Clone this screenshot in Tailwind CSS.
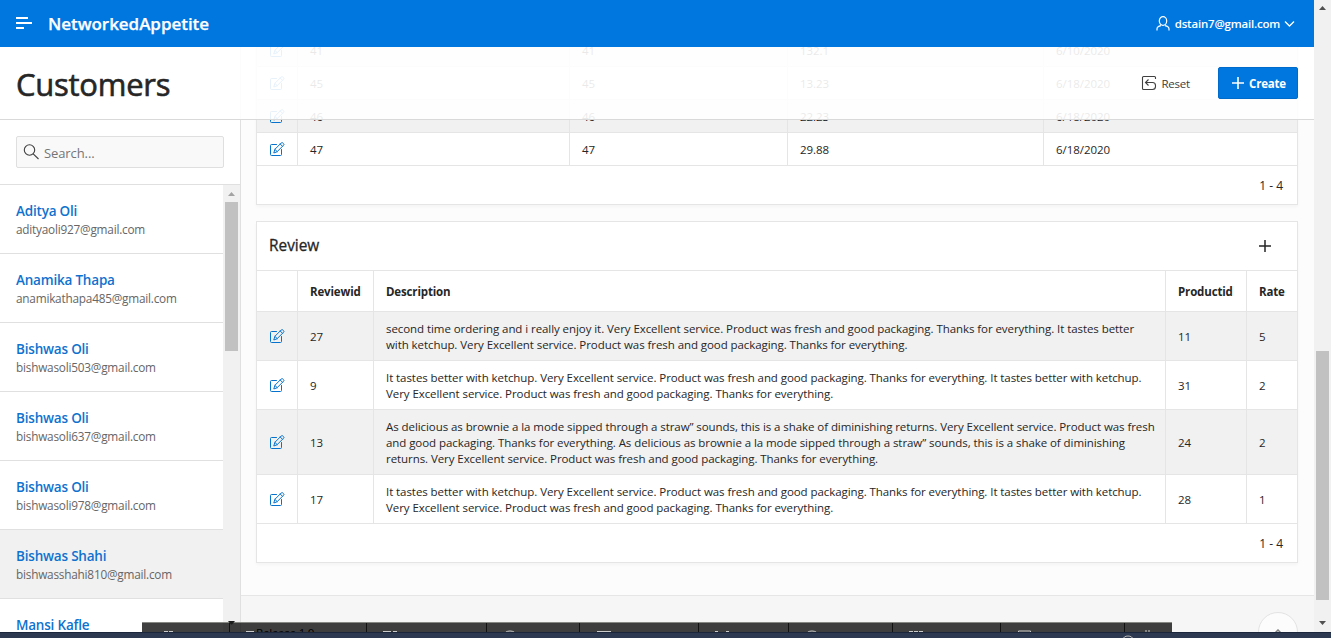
<!DOCTYPE html>
<html lang="en">
<head>
<meta charset="utf-8">
<title>Customers</title>
<script src="https://cdn.jsdelivr.net/npm/@tailwindcss/browser@4"></script>
</head>
<body class="font-['Open_Sans','Noto_Sans',sans-serif] text-[11.5px] text-[#262626] bg-[#fcfcfc]">
<svg class="hidden">
  <symbol id="edit" viewBox="0 0 16 16"><g fill="none" stroke="currentColor" stroke-width="1" stroke-linejoin="round" stroke-linecap="round"><path d="M7.500 2.500h-5a1 1 0 0 0-1 1v9a1 1 0 0 0 1 1h9a1 1 0 0 0 1-1V7.500"/><path d="M4.900 10.600l1-3.300 6.300-6.300a1.150 1.150 0 0 1 1.700 0l.6.600a1.150 1.150 0 0 1 0 1.700L8.200 9.600zM6 7.500l2.200 2.100M11.200 2l2.200 2.200"/></g></symbol>
</svg>
<div class="relative flex h-[638px] w-[1331px] overflow-hidden">
  <div class="flex w-[1314px] flex-col">
    <header class="z-20 flex h-[47px] shrink-0 items-center bg-[#0076df] pl-4 pr-[19px] text-white">
      <svg class="h-4 w-4" viewBox="0 0 16 16" fill="none" stroke="#fff" stroke-width="2"><path d="M0 2h12M0 7h16M0 12h8"/></svg>
      <h1 class="ml-4 whitespace-nowrap text-[17px] font-semibold tracking-[-0.04px] [-webkit-text-stroke:0.25px_white]">NetworkedAppetite</h1>
      <div class="ml-auto flex items-center">
        <svg class="mr-[4px] h-4 w-4" viewBox="0 0 16 16" fill="none" stroke="#fff" stroke-width="1.200"><ellipse cx="8" cy="5" rx="3.700" ry="4.300"/><path d="M2 14.500V13c0-1.700 1.500-2.800 4-3.300M14 14.500V13c0-1.700-1.500-2.800-4-3.300"/></svg>
        <span class="font-semibold tracking-[-0.2px]">dstain7@gmail.com</span>
        <svg class="ml-[4px] h-[10px] w-[11px]" viewBox="0 0 11 10" fill="none" stroke="#fff" stroke-width="1.300"><path d="M1 2.500l4.500 4.500L10 2.500"/></svg>
      </div>
    </header>

    <div class="relative flex min-h-0 flex-1">
      <div class="absolute inset-x-0 top-0 z-10 flex h-[73px] items-center border-b border-[#d9d9d9] bg-white/90 pl-4 pr-4">
        <h2 class="pt-[2px] text-[31px] leading-none tracking-[-0.25px] [-webkit-text-stroke:0.6px_#262626]">Customers</h2>
        <button class="ml-auto flex items-center">
          <svg class="mr-[4px] h-4 w-4" viewBox="0 0 16 16" fill="none" stroke="#404040" stroke-width="1.100"><path d="M14.500 4V2.500a1 1 0 0 0-1-1h-11a1 1 0 0 0-1 1v11a1 1 0 0 0 1 1h9a3 3 0 0 0 3-3v-1a3 3 0 0 0-3-3h-7M7.500 4.500L4.500 7.500l3 3"/></svg>
          <span class="pt-px tracking-[-0.2px] text-[#404040]">Reset</span>
        </button>
        <button class="ml-7 flex h-8 w-20 items-center rounded-[2px] border border-[#006bcb] bg-[#0076df] pl-[12px] text-white">
          <svg class="h-[14px] w-[14px]" viewBox="0 0 14 14" stroke="#fff" stroke-width="1.600"><path d="M7 1v12M1 7h12"/></svg>
          <span class="ml-[4px] pt-px font-bold tracking-[-0.2px]">Create</span>
        </button>
      </div>

      <aside class="flex w-[241px] shrink-0 flex-col border-r border-[#e0e0e0] bg-white pt-[73px]">
        <div class="h-[65px] shrink-0 border-b border-[#e0e0e0] px-4 pt-4">
          <div class="flex h-8 items-center rounded-[2px] border border-[#dfdfdf] bg-[#f9f9f9] pl-[6px]">
            <svg class="mr-[5px] h-4 w-4" viewBox="0 0 16 16" fill="none" stroke="#404040" stroke-width="1.100"><circle cx="6.500" cy="6" r="5.200"/><path d="M10.200 9.800l5.300 5.200"/></svg>
            <span class="pt-[3px] text-[13px] tracking-[-0.1px] text-[#757575]">Search...</span>
          </div>
        </div>
        <div class="flex min-h-0 flex-1">
          <ul class="flex-1 [&>li]:h-[69px] [&>li]:border-b [&>li]:border-[#e0e0e0] [&>li]:pl-4 [&>li]:pt-4 [&_a]:block [&_a]:text-[13.5px] [&_a]:font-semibold [&_a]:leading-5 [&_a]:text-[#0f72cf] [&_a]:tracking-[-0.2px] [&_p]:text-[11.8px] [&_p]:leading-4 [&_p]:text-[#666] [&_p]:tracking-[-0.22px]">
            <li><a>Aditya Oli</a><p>adityaoli927@gmail.com</p></li>
            <li><a>Anamika Thapa</a><p>anamikathapa485@gmail.com</p></li>
            <li><a>Bishwas Oli</a><p>bishwasoli503@gmail.com</p></li>
            <li><a>Bishwas Oli</a><p>bishwasoli637@gmail.com</p></li>
            <li><a>Bishwas Oli</a><p>bishwasoli978@gmail.com</p></li>
            <li class="bg-[#f1f1f1]"><a>Bishwas Shahi</a><p>bishwasshahi810@gmail.com</p></li>
            <li><a>Mansi Kafle</a></li>
          </ul>
          <div class="flex w-[17px] flex-col items-center bg-[#f1f1f1] pt-[7px]">
            <svg class="h-[4px] w-[7px]" viewBox="0 0 7 4"><path d="M3.500 0L7 4H0z" fill="#a3a3a3"/></svg>
            <div class="mt-[6px] h-[149px] w-[13px] bg-[#c1c1c1]"></div>
          </div>
        </div>
      </aside>

      <main class="flex flex-1 flex-col overflow-hidden">
        <div class="-mt-[13px] h-[561px] shrink-0 pl-[15px] pr-4">
          <section class="h-[171px] border border-[#e5e5e5] bg-white shadow-[0_2px_3px_rgba(0,0,0,0.03)]">
            <div class="-mt-px tracking-[-0.04px] [&>div]:grid [&>div]:h-[33px] [&>div]:grid-cols-[41px_272px_218px_256px_1fr] [&>div]:border-b [&>div]:border-[#e5e5e5] [&_span]:flex [&_span]:items-center [&_span]:border-r [&_span]:border-[#e5e5e5] [&_span]:pl-3 [&_span]:pt-px [&_span:last-child]:border-r-0">
              <div class="bg-[#f1f1f1]"><span class="text-[#0572ce]"><svg class="h-4 w-4"><use href="#edit"/></svg></span><span>41</span><span>41</span><span>132.1</span><span>6/10/2020</span></div>
              <div><span class="text-[#0572ce]"><svg class="h-4 w-4"><use href="#edit"/></svg></span><span>45</span><span>45</span><span>13.23</span><span>6/18/2020</span></div>
              <div class="bg-[#f1f1f1]"><span class="text-[#0572ce]"><svg class="h-4 w-4"><use href="#edit"/></svg></span><span>46</span><span>46</span><span>22.23</span><span>6/18/2020</span></div>
              <div><span class="text-[#0572ce]"><svg class="h-4 w-4"><use href="#edit"/></svg></span><span>47</span><span>47</span><span>29.88</span><span>6/18/2020</span></div>
            </div>
            <p class="pr-[14px] text-right text-[12px] leading-[39px]">1 - 4</p>
          </section>

          <section class="mt-4 h-[342px] border border-[#e5e5e5] bg-white shadow-[0_2px_3px_rgba(0,0,0,0.03)]">
            <div class="flex h-[49px] items-center justify-between border-b border-[#e5e5e5] pl-3 pr-[26px]">
              <h3 class="text-[15.4px] [-webkit-text-stroke:0.3px_#262626]">Review</h3>
              <svg class="h-3 w-3" viewBox="0 0 12 12" stroke="#262626" stroke-width="1.500"><path d="M6 0v12M0 6h12"/></svg>
            </div>
            <div class="leading-4 tracking-[-0.07px] [&>div]:grid [&>div]:grid-cols-[41px_76px_792px_81px_1fr] [&>div]:border-b [&>div]:border-[#e5e5e5] [&>div>span]:flex [&>div>span]:items-center [&>div>span]:border-r [&>div>span]:border-[#e5e5e5] [&>div>span]:pl-3 [&>div>span]:pt-[2px] [&>div>span:last-child]:border-r-0 [&_p]:whitespace-nowrap">
              <div class="h-[41px] font-bold tracking-[-0.15px]"><span></span><span>Reviewid</span><span>Description</span><span>Productid</span><span>Rate</span></div>
              <div class="h-[49px] bg-[#f1f1f1]"><span class="text-[#0572ce]"><svg class="h-4 w-4"><use href="#edit"/></svg></span><span>27</span><span><p>second time ordering and i really enjoy it. Very Excellent service. Product was fresh and good packaging. Thanks for everything. It tastes better<br>with ketchup. Very Excellent service. Product was fresh and good packaging. Thanks for everything.</p></span><span>11</span><span>5</span></div>
              <div class="h-[49px]"><span class="text-[#0572ce]"><svg class="h-4 w-4"><use href="#edit"/></svg></span><span>9</span><span><p>It tastes better with ketchup. Very Excellent service. Product was fresh and good packaging. Thanks for everything. It tastes better with ketchup.<br>Very Excellent service. Product was fresh and good packaging. Thanks for everything.</p></span><span>31</span><span>2</span></div>
              <div class="h-[65px] bg-[#f1f1f1]"><span class="text-[#0572ce]"><svg class="h-4 w-4"><use href="#edit"/></svg></span><span>13</span><span><p>As delicious as brownie a la mode sipped through a straw” sounds, this is a shake of diminishing returns. Very Excellent service. Product was fresh<br>and good packaging. Thanks for everything. As delicious as brownie a la mode sipped through a straw” sounds, this is a shake of diminishing<br>returns. Very Excellent service. Product was fresh and good packaging. Thanks for everything.</p></span><span>24</span><span>2</span></div>
              <div class="h-[49px]"><span class="text-[#0572ce]"><svg class="h-4 w-4"><use href="#edit"/></svg></span><span>17</span><span><p>It tastes better with ketchup. Very Excellent service. Product was fresh and good packaging. Thanks for everything. It tastes better with ketchup.<br>Very Excellent service. Product was fresh and good packaging. Thanks for everything.</p></span><span>28</span><span>1</span></div>
            </div>
            <p class="pr-[14px] text-right text-[12px] leading-[39px]">1 - 4</p>
          </section>
        </div>
        <footer class="flex flex-1 items-start justify-between border-t border-[#e6e6e6] bg-[#f6f6f6] pl-[15px] pr-4">
          <span class="pt-[29px] text-[11.5px] leading-4 tracking-[-0.2px] text-black">Release 1.0</span>
          <div class="mt-4 flex h-10 w-10 justify-center rounded-full border border-[#e3e3e3] bg-[#fcfcfc] pt-[16px]"><svg class="h-[6px] w-[10px]" viewBox="0 0 10 6" fill="none" stroke="#808080" stroke-width="1.500"><path d="M1 5l4-4 4 4"/></svg></div>
        </footer>
      </main>
    </div>
  </div>

  <div class="flex w-[17px] flex-col items-center bg-[#f1f1f1] pt-[6px]">
    <svg class="h-[4px] w-[7px]" viewBox="0 0 7 4"><path d="M3.500 0L7 4H0z" fill="#505050"/></svg>
    <div class="mt-[341px] h-[249px] w-[13px] bg-[#c1c1c1]"></div>
    <svg class="mt-[21px] h-[4px] w-[7px]" viewBox="0 0 7 4"><path d="M3.500 4L7 0H0z" fill="#505050"/></svg>
  </div>

  <div class="absolute left-[142px] top-[622px] z-30 grid h-[10px] w-[1030px] grid-cols-[88px_137px_120px_93px_119px_90px_104px_108px_124px_1fr] border-t border-[#858883] bg-black/75 [&>i]:border-r [&>i]:border-[#111] [&>i:last-child]:border-r-0 [&_svg]:h-[9px] [&_svg]:w-5">
    <i class="pl-[20px]"><svg viewBox="0 0 20 9" stroke="#ccc"><path d="M2 8.500h4M7 8.500h4"/></svg></i>
    <i class="pl-[13px]"><svg viewBox="0 0 20 9" stroke="#ccc"><path d="M3 8.500h8"/></svg></i>
    <i class="pl-[14px]"><svg viewBox="0 0 20 9" stroke="#ccc"><path d="M2 8.500h8M12 8.500h4"/></svg></i>
    <i class="pl-[13px]"><svg viewBox="0 0 20 9" fill="none" stroke="#ccc"><ellipse cx="10" cy="12" rx="6" ry="4"/></svg></i>
    <i class="pl-[14px]"><svg viewBox="0 0 20 9" stroke="#ccc"><path d="M3 8.500h14"/></svg></i>
    <i class="pl-[14px]"><svg viewBox="0 0 20 9" stroke="#ccc"><path d="M2 8.500h3M13 8.500h3"/></svg></i>
    <i class="pl-[13px]"><svg viewBox="0 0 20 9" fill="none" stroke="#ccc"><ellipse cx="10" cy="12" rx="6" ry="4"/></svg></i>
    <i class="pl-[13px]"><svg viewBox="0 0 20 9" stroke="#ccc"><path d="M3 8.500h4M8 8.500h4M13 8.500h4"/></svg></i>
    <i class="pl-[14px]"><svg viewBox="0 0 20 9" fill="none" stroke="#ccc"><path d="M3.500 9V8h12v1"/></svg></i>
    <i class="pl-[14px]"><svg viewBox="0 0 20 9" stroke="#ccc"><path d="M6 8h2M9 8h2"/></svg></i>
  </div>
  <svg class="absolute left-[228px] top-[621px] z-30 h-[5px] w-[7px]" viewBox="0 0 7 5"><path d="M0 0h7L4 3.500H3z" fill="#1c1c1c"/></svg>
  <div class="absolute inset-x-0 top-[632px] z-40 h-[6px] border-t border-[#1b263c] bg-[#2d3950]">
    <svg class="ml-[1120px] h-[5px] w-4" viewBox="0 0 16 5" fill="none" stroke="#bbb"><ellipse cx="8" cy="6.500" rx="5" ry="3.500"/></svg>
  </div>
</div>
</body>
</html>
